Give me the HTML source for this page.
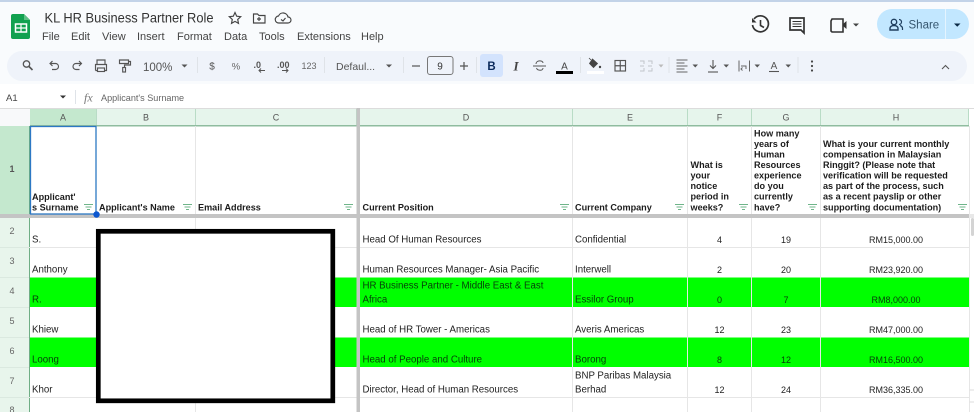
<!DOCTYPE html>
<html lang="en"><head><meta charset="utf-8"><title>KL HR Business Partner Role</title>
<style>
html,body{margin:0;padding:0;background:#fff;width:974px;height:412px;overflow:hidden}
svg{display:block;filter:blur(.35px)}
text{font-family:"Liberation Sans",sans-serif;white-space:pre}
.m{font-size:11px;fill:#444}
.h{font-size:9.1px;font-weight:bold;fill:#1c1c1c}
.c{font-size:9.7px;fill:#222}
.n{font-size:9px;fill:#222;text-anchor:middle}
.l{font-size:9px;fill:#555;text-anchor:middle}
.r{font-size:9px;fill:#666;text-anchor:middle}
.g{fill:#063f0a !important}
.i{fill:none;stroke:#555;stroke-width:1.15}
.v{fill:#555}
.s{stroke:#dfe3e8;stroke-width:1}
.gl{stroke:#e6e6e6;stroke-width:1}
</style></head><body>
<svg width="974" height="412" viewBox="0 0 974 412" xmlns="http://www.w3.org/2000/svg">
<rect width="974" height="108" fill="#f9fbfd"/>
<rect width="974" height="2" fill="#c3d3e8"/>
<rect y="84" width="974" height="24" fill="#fff"/>
<rect x="7" y="51" width="960" height="30" rx="15" fill="#eff3fa"/>

<!-- sheets logo -->
<path d="M13 14h11l6 6v17a2 2 0 0 1-2 2H13a2 2 0 0 1-2-2V16a2 2 0 0 1 2-2z" fill="#12a150"/>
<path d="M24 14l6 6h-6z" fill="#5fbf85"/>
<rect x="15.5" y="24" width="11" height="8" fill="none" stroke="#fff" stroke-width="1.5"/>
<path d="M21 24v8M15.5 28h11" stroke="#fff" stroke-width="1.2"/>

<text x="44.500" y="22.500" font-size="13.800" fill="#333" textLength="169" lengthAdjust="spacingAndGlyphs">KL HR Business Partner Role</text>
<path d="M235 12.500l1.700 3.700 4 .5-3 2.700.8 4-3.500-2-3.500 2 .8-4-3-2.700 4-.5z" class="i" style="stroke:#444"/>
<path d="M253.500 14h4l1.500 1.500h6v7.500h-11.500z" class="i" style="stroke:#444"/><path d="M259 17v4M257 19h4" class="i" style="stroke:#444"/>
<path d="M279 23a3.500 3.500 0 0 1-.5-7 5 5 0 0 1 9.500 1 3 3 0 0 1 0 6z" class="i" style="stroke:#444"/><path d="M281 19.500l2 1.500 2.500-3" class="i" style="stroke:#444"/>

<g class="m">
<text x="42" y="40">File</text><text x="71" y="40">Edit</text><text x="102" y="40">View</text><text x="137" y="40">Insert</text><text x="177" y="40">Format</text><text x="224" y="40">Data</text><text x="259" y="40">Tools</text><text x="297" y="40">Extensions</text><text x="361" y="40">Help</text>
</g>

<!-- right icons -->
<path d="M754 19a8 8 0 1 1-1.500 6" style="fill:none;stroke:#333;stroke-width:1.700"/>
<path d="M752 18v4.500h4.500z" fill="#333"/><path d="M760.500 20v5.500l3.500 2" style="fill:none;stroke:#333;stroke-width:1.600"/>
<path d="M790 18h14v15l-3-3h-11z" style="fill:none;stroke:#333;stroke-width:1.700"/><path d="M792.500 21.500h9M792.500 24h9M792.500 26.500h9" style="stroke:#333;stroke-width:1.100"/>
<path d="M832 19h11v13h-11l0 0-1-1V21z" style="fill:none;stroke:#333;stroke-width:1.600"/><path d="M843 24l3.500-3v8l-3.500-3z" fill="#333"/>
<path d="M853 23.500h6l-3 3z" fill="#444"/>
<rect x="877" y="9" width="92" height="30" rx="15" fill="#c2e7ff"/>
<rect x="945" y="9" width="1" height="30" fill="#e4f4ff"/>
<circle cx="894" cy="22" r="2.700" style="fill:none;stroke:#1f3f5f;stroke-width:1.400"/>
<path d="M890 30v-1.500c0-2 2-3 4-3s4 1 4 3V30z" style="fill:none;stroke:#1f3f5f;stroke-width:1.400"/>
<path d="M899 19.500a2.500 2.500 0 0 1 0 5M900 25.500c1.500.5 2.500 1.500 2.500 3V30" style="fill:none;stroke:#1f3f5f;stroke-width:1.200"/>
<text x="908.500" y="28.500" font-size="11.500" fill="#35566f">Share</text>
<path d="M954 23.500h6.500l-3.250 3.200z" fill="#0b2a45"/>

<!-- toolbar -->
<circle cx="26.500" cy="64" r="3.200" style="fill:none;stroke:#555;stroke-width:1.300"/><path d="M29 66.500l3.500 3.500" style="stroke:#555;stroke-width:1.600"/>
<path d="M50.500 63.500h5a3 3 0 0 1 0 6h-3.500M52.500 61l-2.500 2.500 2.500 2.500" class="i"/>
<path d="M81 63.500h-5a3 3 0 0 0 0 6h3.500M79 61l2.500 2.500-2.500 2.500" class="i"/>
<path d="M97 64v-4h8v4M95.500 70.500V64.500h11v6H104.500M97.500 70.500H95.500" class="i"/><rect x="97.500" y="68" width="7" height="3.500" class="i"/>
<path d="M119.500 60h9v3.500h-9zM128.500 61.500h2v3.500h-6v2.500" class="i"/><rect x="122.700" y="67.500" width="2.800" height="4.500" class="i"/>
<text x="143" y="71" font-size="11.500" fill="#555">100%</text>
<path class="v" d="M181.500 64.500h6l-3 3z"/><path d="M197.500 57v16" class="s"/>
<text x="212" y="69.500" class="r" style="font-size:10px;fill:#555">$</text>
<text x="236" y="69.500" class="r" style="font-size:9.500px">%</text>
<text x="253.500" y="68" font-size="9" font-weight="bold" fill="#555">.0</text><path d="M259 70.500h6M261 68.500l-2 2 2 2" style="fill:none;stroke:#555;stroke-width:1"/>
<text x="277" y="68" font-size="9" font-weight="bold" fill="#555">.00</text><path d="M282 70.500h6M286 68.500l2 2-2 2" style="fill:none;stroke:#555;stroke-width:1"/>
<text x="309" y="69" class="r">123</text><path d="M324.500 57v16" class="s"/>
<text x="336" y="70" font-size="10.500" fill="#555">Defaul...</text>
<path class="v" d="M386 64.500h6l-3 3z"/><path d="M403.500 57v16" class="s"/>
<path d="M412 66h8" style="stroke:#555;stroke-width:1.200"/>
<rect x="427.500" y="56.500" width="25.500" height="18" rx="2.500" fill="none" stroke="#777"/>
<text x="440" y="69.500" font-size="10" fill="#333" text-anchor="middle">9</text>
<path d="M460 66h8M464 62v8" style="stroke:#555;stroke-width:1.200"/><path d="M476.500 57v16" class="s"/>
<rect x="480" y="54" width="23" height="23" rx="3" fill="#d3e3fd"/>
<text x="491.500" y="70" font-size="11.500" font-weight="bold" fill="#0b2a5c" text-anchor="middle">B</text>
<text x="516" y="70.500" font-size="13" font-weight="bold" font-style="italic" fill="#444" text-anchor="middle" style="font-family:'Liberation Serif',serif">I</text>
<path d="M533 66h13" style="stroke:#555;stroke-width:1"/><path d="M536 64c0-4 7-4 7-1M536.500 68c1 3 6.500 3 6.500 0" style="fill:none;stroke:#555;stroke-width:1"/>
<text x="564.500" y="69.500" font-size="10" fill="#444" text-anchor="middle">A</text><rect x="556" y="71" width="17" height="3" fill="#000"/>
<path d="M580.500 57v16" class="s"/>
<path d="M592.500 59l5 4.500-4 4-4-4zM591 60l-2-2" style="fill:#444;stroke:#444;stroke-width:.8"/><circle cx="600" cy="67" r="1.200" fill="#444"/><rect x="587" y="71" width="17" height="3" fill="#fff"/>
<rect x="615" y="60.500" width="10.500" height="10.500" class="i"/><path d="M620.250 60.500v10.500M615 65.750h10.500" class="i"/>
<path d="M640 61h4v3M648 61h4v3M640 71h4v-3M648 71h4v-3M640 66h4M648 66h4" style="fill:none;stroke:#c2c6cb;stroke-width:1"/>
<path d="M658.500 64.500h5l-2.500 3z" style="fill:#bbb"/><path d="M669 57v16" class="s"/>
<path d="M676.500 60h11M676.500 63h8M676.500 66h11M676.500 69h8M676.500 72h11" style="stroke:#666;stroke-width:1.100"/>
<path class="v" d="M692.500 64.500h5.500l-2.750 3z"/>
<path d="M713 60v8M710 65.500l3 3 3-3" style="fill:none;stroke:#555;stroke-width:1.100"/><path d="M708 72h10" style="stroke:#555;stroke-width:1.100"/>
<path class="v" d="M723.500 64.500h5.500l-2.750 3z"/>
<path d="M739 60.500v11M749.500 60.500v11M741 66h5v3M742.500 67.500l-1.500 1.500 1.500 1.500" style="fill:none;stroke:#666;stroke-width:1"/>
<path class="v" d="M754.500 64.500h5.500l-2.750 3z"/>
<text x="774" y="69" font-size="10" fill="#555" text-anchor="middle">A</text><path d="M769 71.500h10" style="stroke:#555;stroke-width:1.100"/>
<path class="v" d="M785.500 64.500h5.500l-2.750 3z"/><path d="M798 57v16" class="s"/>
<circle cx="812" cy="61.500" r="1.100" fill="#444"/><circle cx="812" cy="66" r="1.100" fill="#444"/><circle cx="812" cy="70.500" r="1.100" fill="#444"/>
<path d="M942 69l3.500-3.500 3.500 3.500" style="fill:none;stroke:#555;stroke-width:1.100"/>

<!-- formula bar -->
<text x="6" y="101" font-size="9.500" fill="#444">A1</text>
<path d="M60 95.500h6l-3 3z" style="fill:#333"/><path d="M75.500 90v14" class="s"/>
<text x="84" y="101.500" font-size="12" font-style="italic" fill="#777" style="font-family:'Liberation Serif',serif">fx</text>
<text x="101" y="101" font-size="9.100" fill="#666">Applicant's Surname</text>

<!-- grid: headers -->
<rect y="108" width="974" height="304" fill="#fff"/>
<rect x="0" y="108" width="30" height="18" fill="#f8f9fa"/>
<rect x="30" y="108" width="939" height="18" fill="#e6f5ec"/>
<rect x="30" y="108" width="66" height="18" fill="#c4e8ce"/>
<rect x="0" y="126" width="30" height="88" fill="#c4e8ce"/>
<rect x="0" y="218" width="30" height="194" fill="#e8f5ec"/>
<rect x="0" y="108" width="974" height="1" fill="#dcdcdc"/>
<rect x="30" y="125" width="939" height="1.500" fill="#8fbc9f"/>
<rect x="29" y="126" width="1" height="286" fill="#6fae85"/>

<!-- green rows -->
<rect x="30" y="277.500" width="939" height="29.500" fill="#00ff00"/>
<rect x="30" y="337.500" width="939" height="29.500" fill="#00ff00"/>

<!-- grid lines -->
<g class="gl">
<path d="M195.500 126v88M195.500 218v194M572.500 126v88M572.500 218v194M687.500 126v88M687.500 218v194M751.500 126v88M751.500 218v194M820.500 126v88M820.500 218v194M969.500 126v88M969.500 218v194"/>
<path d="M0 247.500h969M0 397.500h969"/>
</g>
<g stroke="#b9dcc6" stroke-width="1"><path d="M96.500 109v16M195.500 109v16M356.500 109v16M572.500 109v16M687.500 109v16M751.500 109v16M820.500 109v16M968.500 109v16"/></g>
<path d="M0 247.500h29M0 277.500h29M0 307.500h29M0 337.500h29M0 367.500h29M0 397.500h29" stroke="#dbe9e0"/>
<rect x="0" y="214" width="969" height="4" fill="#c4c4c4"/>
<rect x="356.500" y="108" width="3.500" height="304" fill="#c4c4c4"/>
<rect x="969" y="214" width="5" height="4" fill="#e8e8e8"/>
<rect x="971" y="218" width="3" height="18" rx="1.500" fill="#d4d4d4"/>
<path d="M969.500 390h5M969.500 402h5" stroke="#ddd"/>

<!-- col letters -->
<g class="l"><text x="63" y="120.500">A</text><text x="146" y="120.500">B</text><text x="276" y="120.500">C</text><text x="466" y="120.500">D</text><text x="630" y="120.500">E</text><text x="719.500" y="120.500">F</text><text x="786" y="120.500">G</text><text x="896" y="120.500">H</text></g>
<!-- row numbers -->
<g class="r"><text x="12" y="172" font-weight="bold" style="fill:#555">1</text><text x="12" y="234">2</text><text x="12" y="264">3</text><text x="12" y="294">4</text><text x="12" y="324">5</text><text x="12" y="354">6</text><text x="12" y="384">7</text><text x="12" y="413">8</text></g>

<!-- header text -->
<g class="h">
<text x="32" y="199.800">Applicant'</text><text x="32" y="210.300">s Surname</text>
<text x="99" y="210.300">Applicant's Name</text>
<text x="198" y="210.300">Email Address</text>
<text x="362.500" y="210.300">Current Position</text>
<text x="575" y="210.300">Current Company</text>
<text x="690.500" y="168">What is</text><text x="690.500" y="178.500">your</text><text x="690.500" y="189">notice</text><text x="690.500" y="199.700">period in</text><text x="690.500" y="210.300">weeks?</text>
<text x="754" y="136.500">How many</text><text x="754" y="147">years of</text><text x="754" y="157.500">Human</text><text x="754" y="168">Resources</text><text x="754" y="178.500">experience</text><text x="754" y="189">do you</text><text x="754" y="199.700">currently</text><text x="754" y="210.300">have?</text>
<text x="823" y="147">What is your current monthly</text><text x="823" y="157.500">compensation in Malaysian</text><text x="823" y="168">Ringgit? (Please note that</text><text x="823" y="178.500">verification will be requested</text><text x="823" y="189">as part of the process, such</text><text x="823" y="199.700">as a recent payslip or other</text><text x="823" y="210.300">supporting documentation)</text>
</g>
<!-- filter icons -->
<g stroke="#6fb58a" stroke-width="1" fill="none">
<path d="M84 204.500h9M85.500 207h6M87 209.500h3"/><path d="M183 204.500h9M184.500 207h6M186 209.500h3"/><path d="M344 204.500h9M345.500 207h6M347 209.500h3"/><path d="M560 204.500h9M561.500 207h6M563 209.500h3"/><path d="M675 204.500h9M676.500 207h6M678 209.500h3"/><path d="M739 204.500h9M740.500 207h6M742 209.500h3"/><path d="M808 204.500h9M809.500 207h6M811 209.500h3"/><path d="M958 204.500h9M959.500 207h6M961 209.500h3"/>
</g>

<!-- selection -->
<rect x="30.500" y="126.500" width="65.500" height="87.500" fill="none" stroke="#2c78c4" stroke-width="1.300"/>
<circle cx="96.500" cy="214.500" r="3.200" fill="#0b57d0"/>

<!-- cells -->
<g class="c">
<text x="32" y="242.500">S.</text><text x="362.500" y="242.500">Head Of Human Resources</text><text x="575" y="242.500">Confidential</text>
<text x="32" y="272.500">Anthony</text><text x="362.500" y="272.500">Human Resources Manager- Asia Pacific</text><text x="575" y="272.500">Interwell</text>
<text x="32" y="302.500" class="g">R.</text><text x="362.500" y="288.500" class="g">HR Business Partner - Middle East &amp; East</text><text x="362.500" y="302.500" class="g">Africa</text><text x="575" y="302.500" class="g">Essilor Group</text>
<text x="32" y="332.500">Khiew</text><text x="362.500" y="332.500">Head of HR Tower - Americas</text><text x="575" y="332.500">Averis Americas</text>
<text x="32" y="362.500" class="g">Loong</text><text x="362.500" y="362.500" class="g">Head of People and Culture</text><text x="575" y="362.500" class="g">Borong</text>
<text x="32" y="392.500">Khor</text><text x="362.500" y="392.500">Director, Head of Human Resources</text><text x="575" y="378.500">BNP Paribas Malaysia</text><text x="575" y="392.500">Berhad</text>
</g>
<g class="n">
<text x="719.500" y="243">4</text><text x="786" y="243">19</text><text x="896" y="243">RM15,000.00</text>
<text x="719.500" y="273">2</text><text x="786" y="273">20</text><text x="896" y="273">RM23,920.00</text>
<text x="719.500" y="303" class="g">0</text><text x="786" y="303" class="g">7</text><text x="896" y="303" class="g">RM8,000.00</text>
<text x="719.500" y="333">12</text><text x="786" y="333">23</text><text x="896" y="333">RM47,000.00</text>
<text x="719.500" y="363" class="g">8</text><text x="786" y="363" class="g">12</text><text x="896" y="363" class="g">RM16,500.00</text>
<text x="719.500" y="393">12</text><text x="786" y="393">24</text><text x="896" y="393">RM36,335.00</text>
</g>

<!-- redaction box -->
<rect x="98.300" y="231.300" width="234.500" height="169.500" fill="#fff" stroke="#000" stroke-width="4.700"/>
</svg>
</body></html>
